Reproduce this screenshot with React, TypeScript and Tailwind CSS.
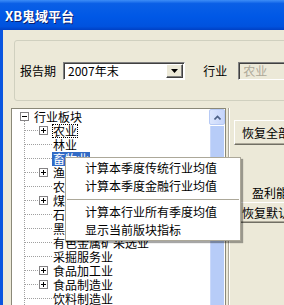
import React from "react";

type Row = { label: string; level: 0 | 1; box?: "plus" | "minus"; focus?: boolean; selected?: boolean };

const rows: Row[] = [
  { label: "行业板块", level: 0, box: "minus" },
  { label: "农业", level: 1, box: "plus", focus: true },
  { label: "林业", level: 1 },
  { label: "畜牧业", level: 1, selected: true },
  { label: "渔业", level: 1, box: "plus" },
  { label: "农林牧渔服务业", level: 1 },
  { label: "煤炭采选业", level: 1, box: "plus" },
  { label: "石油和天然气开采业", level: 1 },
  { label: "黑色金属矿采选业", level: 1 },
  { label: "有色金属矿采选业", level: 1 },
  { label: "采掘服务业", level: 1 },
  { label: "食品加工业", level: 1, box: "plus" },
  { label: "食品制造业", level: 1, box: "plus" },
  { label: "饮料制造业", level: 1 },
];

const DOT = "#A0A0A0";

function Box({ x, kind }: { x: number; kind: "plus" | "minus" }) {
  return (
    <g shapeRendering="crispEdges">
      <rect x={x + 0.5} y={2.5} width={8} height={8} fill="#fff" stroke="#848284" />
      <line x1={x + 2} y1={6.5} x2={x + 7} y2={6.5} stroke="#000" />
      {kind === "plus" && <line x1={x + 4.5} y1={4} x2={x + 4.5} y2={9} stroke="#000" />}
    </g>
  );
}

function Gutter({ row }: { row: Row }) {
  if (row.level === 0) {
    return (
      <svg width={21} height={14} className="shrink-0">
        <line x1={12.5} y1={11} x2={12.5} y2={14} stroke={DOT} strokeDasharray="1 1" shapeRendering="crispEdges" />
        <Box x={8} kind="minus" />
      </svg>
    );
  }
  return (
    <svg width={40} height={14} className="shrink-0">
      <line x1={12.5} y1={0} x2={12.5} y2={14} stroke={DOT} strokeDasharray="1 1" shapeRendering="crispEdges" />
      <line x1={13} y1={6.5} x2={row.box ? 27 : 40} y2={6.5} stroke={DOT} strokeDasharray="1 1" shapeRendering="crispEdges" />
      {row.box && <Box x={27} kind={row.box} />}
    </svg>
  );
}

function RaisedButton({ children, className }: { children: React.ReactNode; className?: string }) {
  return (
    <div
      className={
        "flex items-center bg-[#ECE9D8] border border-t-white border-l-white border-r-[#716F64] border-b-[#716F64] shadow-[inset_-1px_-1px_0_#ACA899] whitespace-nowrap " +
        (className ?? "")
      }
    >
      {children}
    </div>
  );
}

export default function App() {
  return (
    <div
      className="w-[284px] h-[305px] overflow-hidden bg-[#ECE9D8] relative text-[12px] text-black"
      style={{ fontFamily: '"Noto Sans CJK SC", "Noto Sans", sans-serif' }}
    >
      {/* Title bar */}
      <div className="h-[30px] flex items-center pl-[5px] bg-[linear-gradient(to_bottom,#3D8DF7_0%,#0A5FE6_12%,#0058E6_55%,#0052DE_88%,#0040C4_100%)]">
        <span className="text-white font-bold text-[13px] leading-none [text-shadow:1px_1px_0_#0A1E6E]">XB鬼域平台</span>
      </div>

      {/* Body */}
      <div className="flex h-[275px]">
        <div className="w-[3px] bg-[#0A56E0] shrink-0" />
        <div className="flex-1 flex flex-col pt-[10px] min-w-0">
          {/* Group box */}
          <div className="ml-[11px] w-[300px] h-[61px] shrink-0 border border-[#D0D0BF] rounded-[3px] pt-[21px] pl-[5px]">
            <div className="flex items-center h-[18px] whitespace-nowrap">
              <span className="w-[36px] leading-[18px]">报告期</span>
              <div className="ml-[7px] w-[131px] h-[18px] bg-white border border-t-[#808080] border-l-[#808080] border-r-white border-b-white shadow-[inset_1px_1px_0_#404040] flex items-center pl-[4px] pr-[1px]">
                <span className="flex-1 leading-[16px]">2007年末</span>
                <div className="w-[17px] h-[14px] bg-[#ECE9D8] border border-t-white border-l-white border-r-[#404040] border-b-[#404040] shadow-[inset_-1px_-1px_0_#808080] flex items-center justify-center">
                  <svg width="7" height="4" viewBox="0 0 7 4">
                    <path d="M0 0H7L3.5 4Z" fill="#000" />
                  </svg>
                </div>
              </div>
              <span className="ml-[18px] w-[24px] leading-[18px]">行业</span>
              <div className="ml-[11px] w-[80px] h-[18px] border border-t-[#808080] border-l-[#808080] border-r-white border-b-white shadow-[inset_1px_1px_0_#404040] pl-[4px] leading-[16px] text-[#ACA899]">
                农业
              </div>
            </div>
          </div>

          {/* Tree + right panel */}
          <div className="flex mt-[7px] flex-1 min-h-0">
            <div className="ml-[8px] w-[215px] shrink-0 border border-[#8A8878] bg-white flex h-[220px]">
              <div className="flex-1 flex flex-col pt-[1px] overflow-hidden">
                {rows.map((r, i) => (
                  <div key={i} className="flex h-[14px] items-center whitespace-nowrap">
                    <Gutter row={r} />
                    <span
                      className={
                        "h-[14px] leading-[14px] px-[1px] " +
                        (r.selected ? "bg-[#316AC5] text-white " : "") +
                        (r.focus ? "outline outline-1 outline-dotted outline-black -outline-offset-1 " : "")
                      }
                    >
                      {r.label}
                    </span>
                  </div>
                ))}
              </div>
              {/* Scrollbar */}
              <div className="w-[16px] shrink-0 flex flex-col">
                <div className="h-[16px] rounded-[2px] border border-[#B7CAF5] bg-[linear-gradient(to_right,#DCE6FD,#C6D5FB)] flex items-center justify-center">
                  <svg width="7" height="5" viewBox="0 0 7 5">
                    <path d="M0.5 4.5L3.5 1.5L6.5 4.5" fill="none" stroke="#4D6185" strokeWidth="1.6" />
                  </svg>
                </div>
                <div className="flex-1 mt-[1px] border-x border-white bg-[#B7CCF8] shadow-[inset_1px_0_0_#C9D8FA]" />
              </div>
            </div>

            {/* Right panel */}
            <div className="ml-[2px] flex-1 border-l border-[#ACA899] shadow-[inset_1px_0_0_white] pl-[5px] pt-[12px] flex flex-col">
              <RaisedButton className="h-[25px] w-[70px] pl-[7px]">恢复全部</RaisedButton>
              <div className="mt-[41px] ml-[18px] h-[14px] leading-[14px] whitespace-nowrap">盈利能力</div>
              <RaisedButton className="mt-[2px] h-[21px] w-[70px] pl-[7px]">恢复默认</RaisedButton>
            </div>
          </div>
        </div>
      </div>

      {/* Context menu */}
      <div className="absolute left-[65px] top-[157px] w-[176px] bg-white border border-[#ACA899] shadow-[2px_2px_1px_rgba(0,0,0,0.35)] py-[1px]">
        <div className="h-[18px] leading-[18px] pl-[19px] whitespace-nowrap">计算本季度传统行业均值</div>
        <div className="h-[18px] leading-[18px] pl-[19px] whitespace-nowrap">计算本季度金融行业均值</div>
        <div className="h-[8px] flex items-center px-[1px]">
          <div className="h-px w-full bg-[#ACA899]" />
        </div>
        <div className="h-[18px] leading-[18px] pl-[19px] whitespace-nowrap">计算本行业所有季度均值</div>
        <div className="h-[18px] leading-[18px] pl-[19px] whitespace-nowrap">显示当前版块指标</div>
      </div>
    </div>
  );
}
